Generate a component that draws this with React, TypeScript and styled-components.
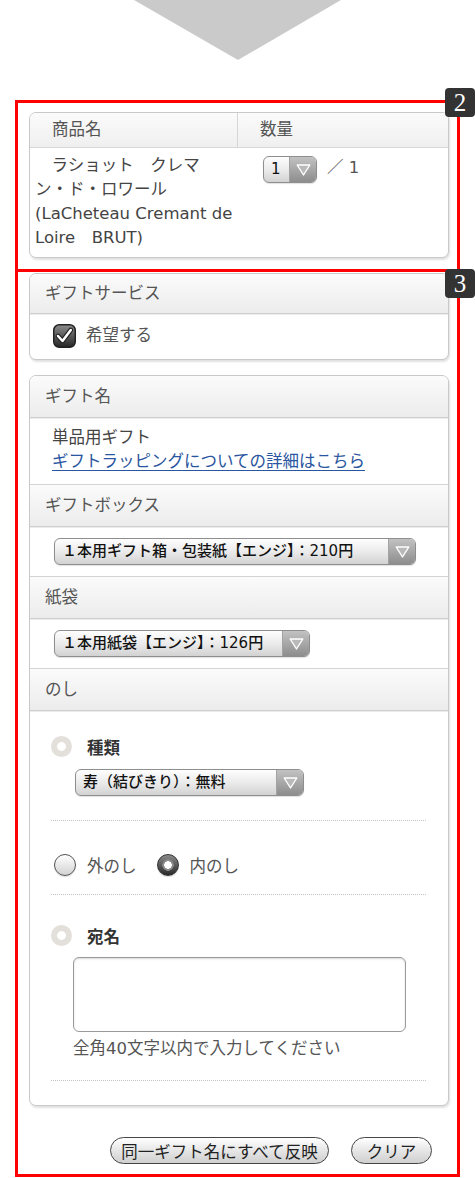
import styled, { createGlobalStyle } from 'styled-components'

const GlobalStyle = createGlobalStyle`
    body {
        margin: 0;
        background: #fff;
        font-family: 'DejaVu Sans', 'Noto Sans CJK JP', sans-serif;
        color: #444;
    }
`

const Page = styled.div`
    width: 475px;
    padding-bottom: 1px;
`

const Arrow = styled.svg`
    display: block;
    margin-bottom: 40px;
`

const Frame = styled.section<{ $first?: boolean }>`
    position: relative;
    width: 445px;
    margin-left: 15px;
    margin-top: ${(p) => (p.$first ? '0' : '-3px')};
    box-sizing: border-box;
    border: 3px solid #ff0000;
    padding: ${(p) => (p.$first ? '9px 8px 11px 11px' : '1px 8px 10px 11px')};
`

const Badge = styled.div<{ $top: number }>`
    position: absolute;
    top: ${(p) => p.$top}px;
    right: -18px;
    width: 30px;
    height: 29px;
    border-radius: 4px;
    background: #333;
    color: #fff;
    font-family: 'Liberation Serif', 'DejaVu Serif', serif;
    font-size: 25px;
    line-height: 29px;
    text-align: center;
`

const Card = styled.div<{ $gap?: number }>`
    background: #fff;
    border: 1px solid #c9c9c9;
    border-radius: 7px;
    box-shadow: 1px 2px 2px rgba(0, 0, 0, 0.12);
    overflow: hidden;
    margin-bottom: ${(p) => p.$gap ?? 0}px;
`

const TableHead = styled.div`
    display: grid;
    grid-template-columns: 208px 1fr;
    height: 34px;
    border-bottom: 1px solid #d6d6d6;
    background: linear-gradient(#fbfbfb, #efefef);
`

const HeadCell = styled.div<{ $divider?: boolean }>`
    padding-left: 22px;
    font-size: 16.5px;
    line-height: 34px;
    color: #555;
    border-right: ${(p) => (p.$divider ? '1px solid #d6d6d6' : 'none')};
`

const TableRow = styled.div`
    display: grid;
    grid-template-columns: 208px 1fr;
    height: 109px;
`

const NameCell = styled.div`
    padding: 6px 0 0 5px;
    font-size: 16.5px;
    line-height: 24px;
    color: #444;
`

const QtyCell = styled.div`
    display: flex;
    align-items: flex-start;
    gap: 10px;
    padding: 8px 0 0 25px;
    font-size: 16.5px;
    line-height: 24px;
    color: #555;
`

const SectionHead = styled.div<{ $height?: number }>`
    height: ${(p) => p.$height ?? 41}px;
    padding-left: 15px;
    border-bottom: 1px solid #cfcfcf;
    box-shadow: 0 1px 0 #ececec;
    background: linear-gradient(#fbfbfb, #ececec);
    font-size: 16.5px;
    line-height: ${(p) => p.$height ?? 41}px;
    color: #555;
`

const SectionBody = styled.div<{ $pad: string; $last?: boolean }>`
    padding: ${(p) => p.$pad};
    border-bottom: ${(p) => (p.$last ? 'none' : '1px solid #d4d4d4')};
    font-size: 16.5px;
    line-height: 24px;
    color: #444;
`

const CheckRow = styled.label`
    display: flex;
    align-items: center;
    gap: 10px;
    color: #555;
`

const Link = styled.a`
    color: #2a55a0;
    text-decoration: underline;
    text-underline-offset: 3px;
`

const SelectBox = styled.div<{ $width: number }>`
    display: flex;
    width: ${(p) => p.$width}px;
    height: 27px;
    box-sizing: border-box;
    border: 1px solid #8e8e8e;
    border-radius: 6px;
    overflow: hidden;
    background: linear-gradient(#fefefe, #e9e9e9 55%, #d2d2d2);
    box-shadow: 0 1px 1px rgba(0, 0, 0, 0.12);
`

const SelectLabel = styled.div`
    flex: 1;
    padding-left: 7px;
    font-size: 15px;
    font-weight: 500;
    line-height: 25px;
    color: #111;
    white-space: nowrap;
    overflow: hidden;
`

const SelectArrow = styled.div`
    display: flex;
    align-items: center;
    justify-content: center;
    width: 26px;
    border-left: 1px solid #a3a3a3;
    background: linear-gradient(#c2c2c2, #8d8d8d);
`

const Select = ({ width, label }: { width: number; label: string }) => (
    <SelectBox $width={width}>
        <SelectLabel>{label}</SelectLabel>
        <SelectArrow>
            <svg width="15" height="12" viewBox="0 0 15 12">
                <polygon
                    points="1.2,1 13.8,1 7.5,11"
                    fill="#b9b9b9"
                    stroke="#fff"
                    strokeWidth="1.4"
                    strokeLinejoin="round"
                />
            </svg>
        </SelectArrow>
    </SelectBox>
)

const NoshiBody = styled.div`
    padding: 0 22px 24px 21px;
`

const NoshiBlock = styled.div<{ $pad: string }>`
    padding: ${(p) => p.$pad};
    border-bottom: 1px dotted #c4c4c4;
`

const OptionTitle = styled.div`
    display: flex;
    align-items: center;
    gap: 15px;
    height: 21px;
    font-size: 16.5px;
    font-weight: 700;
    color: #333;
`

const Marker = styled.span`
    width: 21px;
    height: 21px;
    border-radius: 50%;
    background: radial-gradient(circle, #fff 0 4px, #e3dfda 4.8px);
`

const Indent = styled.div<{ $top: number; $left: number }>`
    margin: ${(p) => p.$top}px 0 0 ${(p) => p.$left}px;
`

const RadioRow = styled.div`
    display: flex;
    align-items: center;
    height: 22px;
    font-size: 16.5px;
    color: #555;
`

const RadioLabel = styled.label`
    display: flex;
    align-items: center;
    gap: 11px;
    margin-right: 20px;
`

const Radio = styled.span<{ $on?: boolean }>`
    width: 22px;
    height: 22px;
    box-sizing: border-box;
    border-radius: 50%;
    border: 1.5px solid ${(p) => (p.$on ? '#333' : '#555')};
    background: ${(p) =>
        p.$on
            ? 'radial-gradient(circle, #fff 0 3.5px, #8a8a8a 4px 5.5px, transparent 6px), linear-gradient(#8a8a8a, #2a2a2a)'
            : 'linear-gradient(#fff, #d2d2d2)'};
    box-shadow: 0 1px 1px rgba(0, 0, 0, 0.15);
`

const TextArea = styled.textarea`
    display: block;
    width: 333px;
    height: 75px;
    box-sizing: border-box;
    margin: 11px 0 0 22px;
    border: 1.5px solid #9a9a9a;
    border-radius: 6px;
    box-shadow: inset 0 1px 2px rgba(0, 0, 0, 0.15);
    resize: none;
    font: inherit;
`

const Hint = styled.div`
    margin: 5px 0 0 22px;
    font-size: 16.5px;
    line-height: 24px;
    color: #555;
`

const Actions = styled.div`
    display: flex;
    justify-content: flex-end;
    gap: 22px;
    margin-top: 31px;
    padding-right: 17px;
`

const PillButton = styled.button<{ $width: number }>`
    width: ${(p) => p.$width}px;
    height: 27px;
    border: 1.5px solid #444;
    border-radius: 14px;
    background: linear-gradient(#fff, #e6e6e6 50%, #cfcfcf);
    font-family: inherit;
    font-size: 16.5px;
    color: #222;
    padding: 0;
`

const CheckIcon = () => (
    <svg width="23" height="24" viewBox="0 0 23 24">
        <defs>
            <linearGradient id="cbg" x1="0" y1="0" x2="0" y2="1">
                <stop offset="0" stopColor="#8c8c8c" />
                <stop offset="1" stopColor="#262626" />
            </linearGradient>
        </defs>
        <rect x="0.75" y="0.75" width="21.5" height="22.5" rx="5.5" fill="url(#cbg)" stroke="#222" strokeWidth="1.5" />
        <path d="M5 12 L9.5 17 L17.8 6" fill="none" stroke="#222" strokeWidth="4.8" strokeLinecap="round" strokeLinejoin="round" />
        <path d="M5 12 L9.5 17 L17.8 6" fill="none" stroke="#fff" strokeWidth="2.5" strokeLinecap="round" strokeLinejoin="round" />
    </svg>
)

export default function App() {
    return (
        <Page>
            <GlobalStyle />
            <Arrow width="475" height="60" viewBox="0 0 475 60">
                <polygon points="134,0 341,0 238,60" fill="#cacaca" />
            </Arrow>

            <Frame $first>
                <Badge $top={-15}>2</Badge>
                <Card>
                    <TableHead>
                        <HeadCell $divider>商品名</HeadCell>
                        <HeadCell>数量</HeadCell>
                    </TableHead>
                    <TableRow>
                        <NameCell>
                            {'\u3000ラショット\u3000クレマ'}
                            <br />
                            {'ン・ド・ロワール(LaCheteau Cremant de Loire\u3000BRUT)'}
                        </NameCell>
                        <QtyCell>
                            <Select width={54} label="1" />
                            <span>／ 1</span>
                        </QtyCell>
                    </TableRow>
                </Card>
            </Frame>

            <Frame>
                <Badge $top={-3}>3</Badge>
                <Card $gap={15}>
                    <SectionHead $height={39}>ギフトサービス</SectionHead>
                    <SectionBody $pad="10px 0 11px 23px" $last>
                        <CheckRow>
                            <CheckIcon />
                            希望する
                        </CheckRow>
                    </SectionBody>
                </Card>

                <Card>
                    <SectionHead>ギフト名</SectionHead>
                    <SectionBody $pad="8px 22px 10px 22px">
                        <div>単品用ギフト</div>
                        <Link href="#">ギフトラッピングについての詳細はこちら</Link>
                    </SectionBody>
                    <SectionHead>ギフトボックス</SectionHead>
                    <SectionBody $pad="11px 0 11px 24px">
                        <Select width={362} label="１本用ギフト箱・包装紙【エンジ】：210円" />
                    </SectionBody>
                    <SectionHead>紙袋</SectionHead>
                    <SectionBody $pad="11px 0 11px 24px">
                        <Select width={256} label="１本用紙袋【エンジ】：126円" />
                    </SectionBody>
                    <SectionHead>のし</SectionHead>
                    <NoshiBody>
                        <NoshiBlock $pad="25px 0 24px">
                            <OptionTitle>
                                <Marker />
                                種類
                            </OptionTitle>
                            <Indent $top={12} $left={24}>
                                <Select width={229} label="寿（結びきり）：無料" />
                            </Indent>
                        </NoshiBlock>
                        <NoshiBlock $pad="33px 0 18px 3px">
                            <RadioRow>
                                <RadioLabel>
                                    <Radio />
                                    外のし
                                </RadioLabel>
                                <RadioLabel>
                                    <Radio $on />
                                    内のし
                                </RadioLabel>
                            </RadioRow>
                        </NoshiBlock>
                        <NoshiBlock $pad="30px 0 19px">
                            <OptionTitle>
                                <Marker />
                                宛名
                            </OptionTitle>
                            <TextArea />
                            <Hint>全角40文字以内で入力してください</Hint>
                        </NoshiBlock>
                    </NoshiBody>
                </Card>

                <Actions>
                    <PillButton $width={219}>同一ギフト名にすべて反映</PillButton>
                    <PillButton $width={81}>クリア</PillButton>
                </Actions>
            </Frame>
        </Page>
    )
}
